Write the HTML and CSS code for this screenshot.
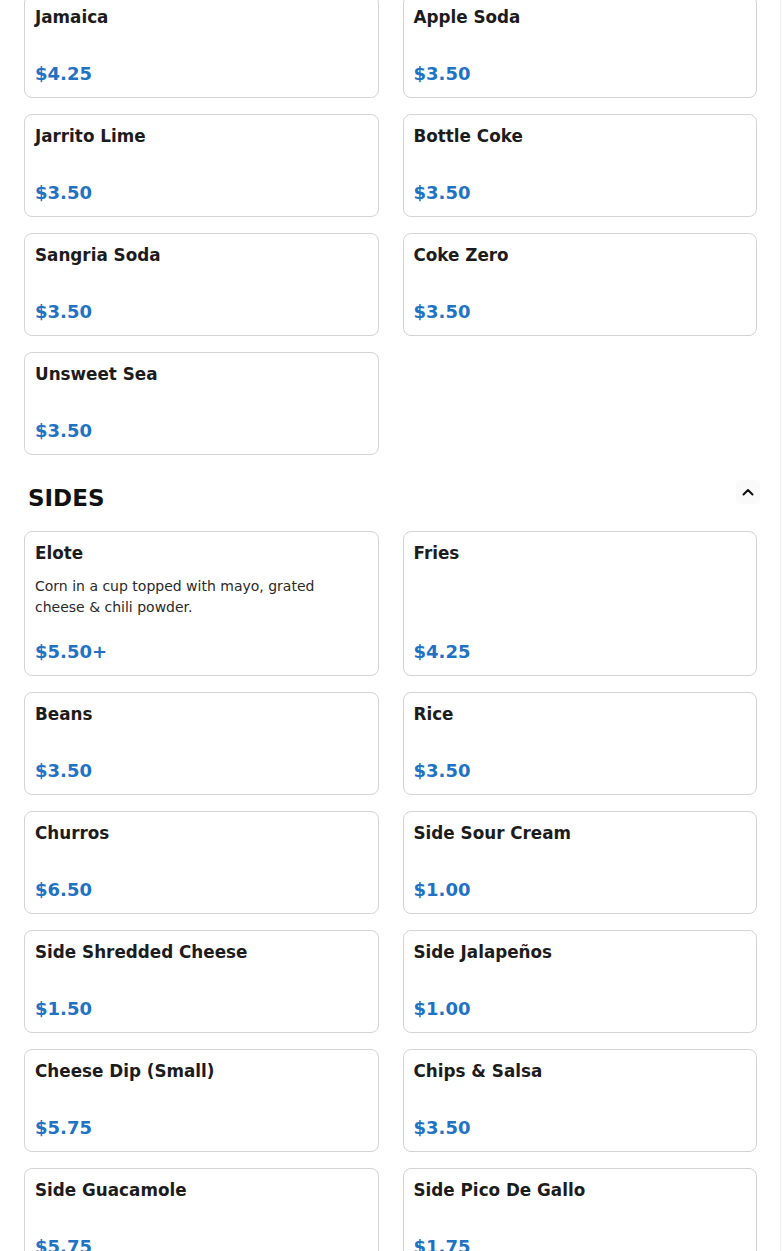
FILE: index.html
```html
<!DOCTYPE html>
<html lang="en">
<head>
<meta charset="utf-8">
<title>Menu</title>
<link rel="stylesheet" href="styles.css">
</head>
<body>
<div class="page">
  <section class="section section-first">
    <div class="grid">
      <div class="card"><div class="name">Jamaica</div><div class="price">$4.25</div></div>
      <div class="card"><div class="name">Apple Soda</div><div class="price">$3.50</div></div>
      <div class="card"><div class="name">Jarrito Lime</div><div class="price">$3.50</div></div>
      <div class="card"><div class="name">Bottle Coke</div><div class="price">$3.50</div></div>
      <div class="card"><div class="name">Sangria Soda</div><div class="price">$3.50</div></div>
      <div class="card"><div class="name">Coke Zero</div><div class="price">$3.50</div></div>
      <div class="card"><div class="name">Unsweet Sea</div><div class="price">$3.50</div></div>
    </div>
  </section>
  <section class="section">
    <div class="section-head">
      <h2 class="section-title">SIDES</h2>
      <button class="toggle" aria-label="Collapse">
        <svg width="12" height="8" viewBox="0 0 12 8"><path d="M1.5 6.5 L6 2 L10.5 6.5" fill="none" stroke="#111" stroke-width="2" stroke-linecap="round" stroke-linejoin="round"/></svg>
      </button>
    </div>
    <div class="grid">
      <div class="card"><div class="name">Elote</div><div class="desc">Corn in a cup topped with mayo, grated cheese &amp; chili powder.</div><div class="price">$5.50+</div></div>
      <div class="card"><div class="name">Fries</div><div class="price">$4.25</div></div>
      <div class="card"><div class="name">Beans</div><div class="price">$3.50</div></div>
      <div class="card"><div class="name">Rice</div><div class="price">$3.50</div></div>
      <div class="card"><div class="name">Churros</div><div class="price">$6.50</div></div>
      <div class="card"><div class="name">Side Sour Cream</div><div class="price">$1.00</div></div>
      <div class="card"><div class="name">Side Shredded Cheese</div><div class="price">$1.50</div></div>
      <div class="card"><div class="name">Side Jalapeños</div><div class="price">$1.00</div></div>
      <div class="card"><div class="name">Cheese Dip (Small)</div><div class="price">$5.75</div></div>
      <div class="card"><div class="name">Chips &amp; Salsa</div><div class="price">$3.50</div></div>
      <div class="card"><div class="name">Side Guacamole</div><div class="price">$5.75</div></div>
      <div class="card"><div class="name">Side Pico De Gallo</div><div class="price">$1.75</div></div>
    </div>
  </section>
</div>
</body>
</html>
```
FILE: styles.css
```css
* { box-sizing: border-box; }
html, body { margin: 0; padding: 0; background: #fff; }
body {
  font-family: "DejaVu Sans", "Liberation Sans", sans-serif;
  color: #1a1a1a;
  overflow: hidden;
}
.page {
  width: 781px;
  padding: 0 23px 40px 24px;
  border-right: 1px solid #efefef;
  min-height: 1251px;
}
.section-first { margin-top: -5px; }
.grid {
  display: grid;
  grid-template-columns: 1fr 1fr;
  column-gap: 24px;
  row-gap: 16px;
}
.card {
  display: flex;
  flex-direction: column;
  min-height: 103px;
  padding: 11px 10px 9px;
  border: 1px solid #d4d4d4;
  border-radius: 8px;
  background: #fff;
}
.name {
  font-size: 16.8px;
  font-weight: bold;
  line-height: 20px;
  color: #1c1c1c;
}
.desc {
  margin-top: 13px;
  font-size: 14px;
  line-height: 21px;
  color: #2a2a2a;
  padding-right: 50px;
}
.price {
  margin-top: auto;
  padding-top: 20px;
  font-size: 18px;
  font-weight: bold;
  line-height: 28px;
  color: #1f72c4;
}
.section-head {
  display: flex;
  justify-content: space-between;
  align-items: flex-start;
  margin-top: 25px;
  margin-bottom: 14px;
  padding-left: 4px;
}
.section-title {
  margin: 0;
  font-size: 23px;
  font-weight: bold;
  line-height: 37px;
  letter-spacing: 0;
  color: #111;
}
.toggle {
  width: 24px;
  height: 24px;
  margin-top: 0;
  margin-right: -3px;
  padding: 0;
  border: none;
  border-radius: 4px;
  background: #fafafa;
  display: flex;
  align-items: center;
  justify-content: center;
}
```
